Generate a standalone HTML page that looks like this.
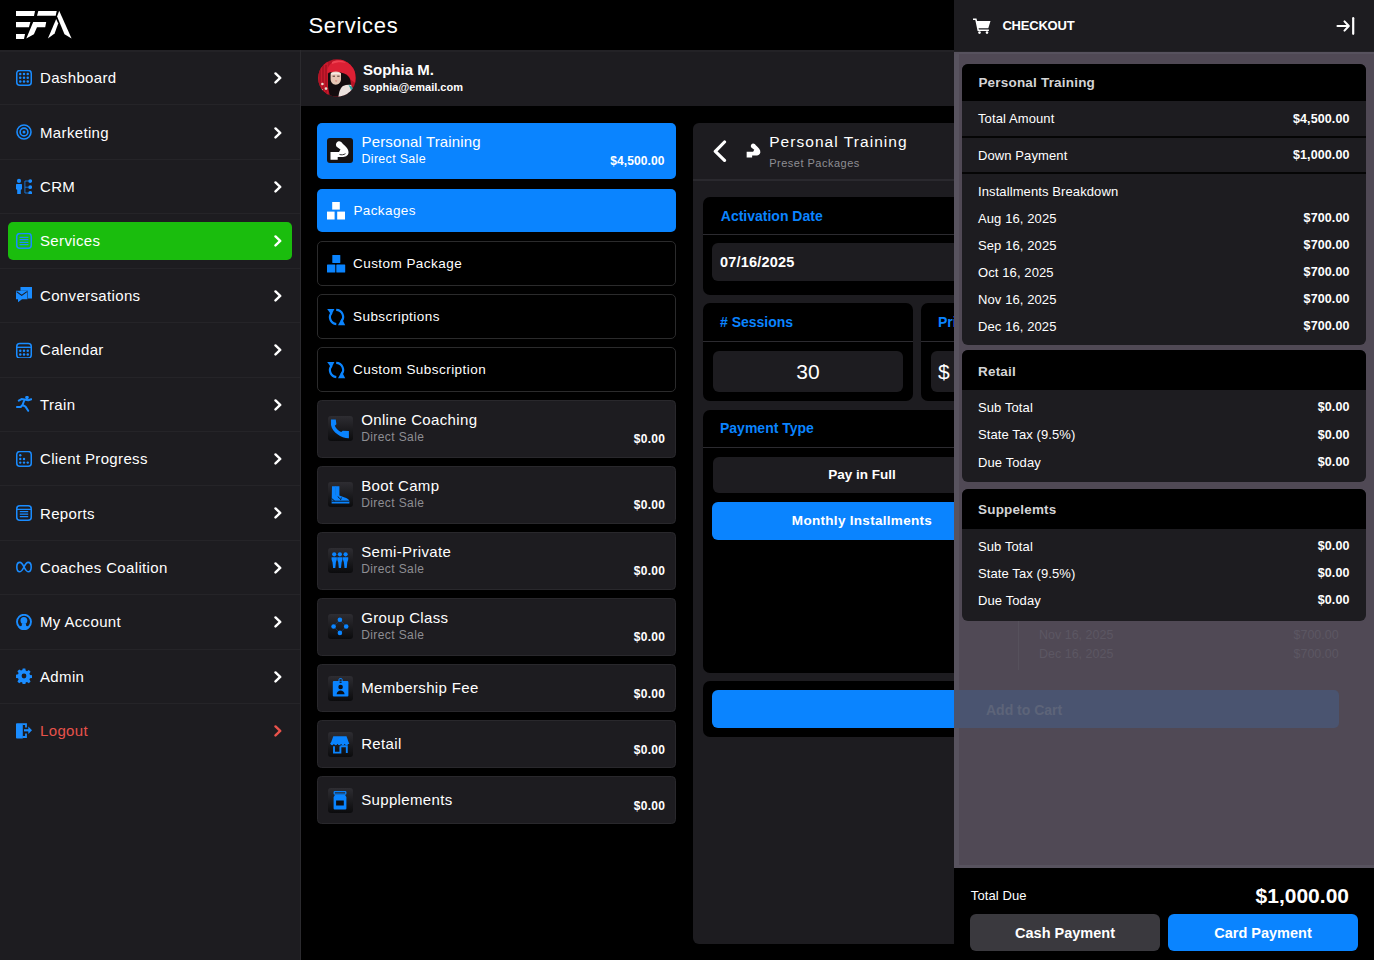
<!DOCTYPE html>
<html><head><meta charset="utf-8"><title>Services</title>
<style>
*{box-sizing:border-box;margin:0;padding:0}
html,body{width:1374px;height:960px;overflow:hidden;background:#000;font-family:"Liberation Sans",sans-serif;color:#fff;position:relative}
.a{position:absolute;display:block}
.t{position:absolute;line-height:1;white-space:nowrap}
</style></head><body>
<div class="a" style="left:0px;top:0px;width:1374px;height:50px;background:#000;border-radius:0px;"></div>
<svg class="a" style="left:16px;top:11px;" width="56" height="28" viewBox="0 0 56 28"><g fill="#fff">
<polygon points="0,0 19,0 18,5 0,5"/>
<polygon points="22.3,0 40.7,0 39.7,4.8 21,4.8"/>
<polygon points="0,11.1 14.4,11.1 12.9,16.2 0,16.2"/>
<polygon points="17.2,11.1 30.2,11.1 29.2,16.2 21,16.2 17.9,23.3 10.3,27.6"/>
<polygon points="0,23 9,23 8,27.9 0,27.9"/>
<polygon points="43.2,-0.2 55.6,27.4 48.5,23.2 41.1,5.5"/>
<polygon points="40.2,8 42.2,12.5 38.6,22.5 31.9,27.4"/>
</g></svg>
<div class="t" style="top:14.98px;font-size:22px;color:#fff;font-weight:400;letter-spacing:0.7px;left:308.5px;">Services</div>
<div class="a" style="left:0px;top:50px;width:300px;height:910px;background:#1d1c20;border-radius:0px;"></div>
<div class="a" style="left:300px;top:50px;width:1px;height:910px;background:#2b2a2e;border-radius:0px;"></div>
<div class="a" style="left:0px;top:50px;width:300px;height:2px;background:#232226;border-radius:0px;"></div>
<div class="a" style="left:0px;top:104px;width:300px;height:1px;background:#252428;border-radius:0px;"></div>
<div class="a" style="left:0px;top:159px;width:300px;height:1px;background:#252428;border-radius:0px;"></div>
<div class="a" style="left:0px;top:213px;width:300px;height:1px;background:#252428;border-radius:0px;"></div>
<div class="a" style="left:0px;top:268px;width:300px;height:1px;background:#252428;border-radius:0px;"></div>
<div class="a" style="left:0px;top:322px;width:300px;height:1px;background:#252428;border-radius:0px;"></div>
<div class="a" style="left:0px;top:377px;width:300px;height:1px;background:#252428;border-radius:0px;"></div>
<div class="a" style="left:0px;top:431px;width:300px;height:1px;background:#252428;border-radius:0px;"></div>
<div class="a" style="left:0px;top:485px;width:300px;height:1px;background:#252428;border-radius:0px;"></div>
<div class="a" style="left:0px;top:540px;width:300px;height:1px;background:#252428;border-radius:0px;"></div>
<div class="a" style="left:0px;top:594px;width:300px;height:1px;background:#252428;border-radius:0px;"></div>
<div class="a" style="left:0px;top:649px;width:300px;height:1px;background:#252428;border-radius:0px;"></div>
<div class="a" style="left:0px;top:703px;width:300px;height:1px;background:#252428;border-radius:0px;"></div>
<div class="a" style="left:8px;top:222px;width:284px;height:38px;background:#1abd0d;border-radius:5px;"></div>
<svg class="a" style="left:16px;top:70px;" width="16" height="16" viewBox="0 0 16 16"><rect x="0.75" y="0.4" width="14.5" height="14.8" rx="3" fill="none" stroke="#1a8cff" stroke-width="1.5"/><circle cx="4.25" cy="4.0" r="1.25" fill="#1a8cff"/><circle cx="4.25" cy="7.8" r="1.25" fill="#1a8cff"/><circle cx="4.25" cy="11.6" r="1.25" fill="#1a8cff"/><circle cx="8.0" cy="4.0" r="1.25" fill="#1a8cff"/><circle cx="8.0" cy="7.8" r="1.25" fill="#1a8cff"/><circle cx="8.0" cy="11.6" r="1.25" fill="#1a8cff"/><circle cx="11.75" cy="4.0" r="1.25" fill="#1a8cff"/><circle cx="11.75" cy="7.8" r="1.25" fill="#1a8cff"/><circle cx="11.75" cy="11.6" r="1.25" fill="#1a8cff"/></svg>
<div class="t" style="top:70.20px;font-size:15px;color:#fff;font-weight:400;letter-spacing:0.35px;left:40px;">Dashboard</div>
<svg class="a" style="left:272px;top:71px;" width="11" height="13" viewBox="0 0 11 13"><path d="M3.5 2.4L8.2 6.9 3.5 11.4" stroke="#fff" stroke-width="2.4" fill="none" stroke-linecap="round" stroke-linejoin="round"/></svg>
<svg class="a" style="left:16px;top:124px;" width="16" height="16" viewBox="0 0 16 16"><circle cx="8" cy="8" r="7" fill="none" stroke="#1a8cff" stroke-width="1.6"/><circle cx="8" cy="8" r="3.9" fill="none" stroke="#1a8cff" stroke-width="1.6"/><circle cx="8" cy="8" r="1.5" fill="#1a8cff"/></svg>
<div class="t" style="top:124.62px;font-size:15px;color:#fff;font-weight:400;letter-spacing:0.35px;left:40px;">Marketing</div>
<svg class="a" style="left:272px;top:126px;" width="11" height="13" viewBox="0 0 11 13"><path d="M3.5 2.4L8.2 6.9 3.5 11.4" stroke="#fff" stroke-width="2.4" fill="none" stroke-linecap="round" stroke-linejoin="round"/></svg>
<svg class="a" style="left:16px;top:178px;" width="16" height="16" viewBox="0 0 16 16"><circle cx="3" cy="2.9" r="2.1" fill="#1a8cff"/><path d="M0.6 6h4.8c0.4 0 0.6 0.3 0.6 0.7v4.3l-1.2 1v4.6H1.2V12l-1.2-1V6.7c0-0.4 0.3-0.7 0.6-0.7z" fill="#1a8cff"/><path d="M8.9 3v12M8.9 3h4M8.9 9.2h4M8.9 15h4" stroke="#1a8cff" stroke-width="1" stroke-opacity="0.75" fill="none"/><circle cx="14.2" cy="3.1" r="1.9" fill="#1a8cff"/><circle cx="14.2" cy="9.2" r="1.9" fill="#1a8cff"/><circle cx="14.2" cy="15" r="1.9" fill="#1a8cff"/></svg>
<div class="t" style="top:179.04px;font-size:15px;color:#fff;font-weight:400;letter-spacing:0.35px;left:40px;">CRM</div>
<svg class="a" style="left:272px;top:180px;" width="11" height="13" viewBox="0 0 11 13"><path d="M3.5 2.4L8.2 6.9 3.5 11.4" stroke="#fff" stroke-width="2.4" fill="none" stroke-linecap="round" stroke-linejoin="round"/></svg>
<svg class="a" style="left:16px;top:233px;" width="16" height="16" viewBox="0 0 16 16"><rect x="0.75" y="0.5" width="14.5" height="14.8" rx="3" fill="none" stroke="#1a8cff" stroke-width="1.5"/><path d="M3.6 4.4h8.8M3.6 6.6h8.8M3.6 9.3h8.8M3.6 11.7h8.8" stroke="#1a8cff" stroke-width="1.2"/></svg>
<div class="t" style="top:233.46px;font-size:15px;color:#fff;font-weight:400;letter-spacing:0.35px;left:40px;">Services</div>
<svg class="a" style="left:272px;top:234px;" width="11" height="13" viewBox="0 0 11 13"><path d="M3.5 2.4L8.2 6.9 3.5 11.4" stroke="#fff" stroke-width="2.4" fill="none" stroke-linecap="round" stroke-linejoin="round"/></svg>
<svg class="a" style="left:16px;top:287px;" width="16" height="16" viewBox="0 0 16 16"><path d="M4.5 0h11.5v11.5h-4V3.8H4.5z" fill="#1a8cff"/><path d="M0 3.8h11.5v8.5H6l-4 3v-3H0z" fill="#1a8cff"/><path d="M0.6 4.6l5.1 3.8 5.2-3.8" stroke="#1d1c20" stroke-width="1.1" fill="none"/></svg>
<div class="t" style="top:287.88px;font-size:15px;color:#fff;font-weight:400;letter-spacing:0.35px;left:40px;">Conversations</div>
<svg class="a" style="left:272px;top:289px;" width="11" height="13" viewBox="0 0 11 13"><path d="M3.5 2.4L8.2 6.9 3.5 11.4" stroke="#fff" stroke-width="2.4" fill="none" stroke-linecap="round" stroke-linejoin="round"/></svg>
<svg class="a" style="left:16px;top:342px;" width="16" height="16" viewBox="0 0 16 16"><rect x="0.75" y="1.5" width="14.5" height="14.5" rx="3" fill="none" stroke="#1a8cff" stroke-width="1.5"/><path d="M1 5.3h14" stroke="#1a8cff" stroke-width="1.4"/><circle cx="4.25" cy="8.8" r="1.25" fill="#1a8cff"/><circle cx="4.25" cy="12.5" r="1.25" fill="#1a8cff"/><circle cx="8.0" cy="8.8" r="1.25" fill="#1a8cff"/><circle cx="8.0" cy="12.5" r="1.25" fill="#1a8cff"/><circle cx="11.75" cy="8.8" r="1.25" fill="#1a8cff"/><circle cx="11.75" cy="12.5" r="1.25" fill="#1a8cff"/></svg>
<div class="t" style="top:342.30px;font-size:15px;color:#fff;font-weight:400;letter-spacing:0.35px;left:40px;">Calendar</div>
<svg class="a" style="left:272px;top:343px;" width="11" height="13" viewBox="0 0 11 13"><path d="M3.5 2.4L8.2 6.9 3.5 11.4" stroke="#fff" stroke-width="2.4" fill="none" stroke-linecap="round" stroke-linejoin="round"/></svg>
<svg class="a" style="left:16px;top:396px;" width="16" height="16" viewBox="0 0 16 16"><circle cx="11" cy="1.6" r="1.8" fill="#1a8cff"/><path d="M2.8 4.6L5.5 3.1 8.5 3.6 12.2 4.3 15.3 3.2M8.4 4 6.5 9M0.9 11h3.8L6.5 9l3 1.6 2.7 4.2" stroke="#1a8cff" stroke-width="2" fill="none" stroke-linecap="round" stroke-linejoin="round"/></svg>
<div class="t" style="top:396.72px;font-size:15px;color:#fff;font-weight:400;letter-spacing:0.35px;left:40px;">Train</div>
<svg class="a" style="left:272px;top:398px;" width="11" height="13" viewBox="0 0 11 13"><path d="M3.5 2.4L8.2 6.9 3.5 11.4" stroke="#fff" stroke-width="2.4" fill="none" stroke-linecap="round" stroke-linejoin="round"/></svg>
<svg class="a" style="left:16px;top:451px;" width="16" height="16" viewBox="0 0 16 16"><rect x="0.75" y="0.5" width="14.5" height="14.7" rx="3" fill="none" stroke="#1a8cff" stroke-width="1.5"/><circle cx="4.25" cy="4.3" r="1.2" fill="#1a8cff"/><circle cx="4.25" cy="8" r="1.2" fill="#1a8cff"/><circle cx="4.25" cy="11.6" r="1.2" fill="#1a8cff"/><circle cx="8" cy="8" r="1.2" fill="#1a8cff"/><circle cx="8" cy="11.6" r="1.2" fill="#1a8cff"/><circle cx="11.75" cy="11.6" r="1.2" fill="#1a8cff"/></svg>
<div class="t" style="top:451.14px;font-size:15px;color:#fff;font-weight:400;letter-spacing:0.35px;left:40px;">Client Progress</div>
<svg class="a" style="left:272px;top:452px;" width="11" height="13" viewBox="0 0 11 13"><path d="M3.5 2.4L8.2 6.9 3.5 11.4" stroke="#fff" stroke-width="2.4" fill="none" stroke-linecap="round" stroke-linejoin="round"/></svg>
<svg class="a" style="left:16px;top:505px;" width="16" height="16" viewBox="0 0 16 16"><rect x="0.75" y="0.75" width="14.5" height="14.5" rx="3" fill="none" stroke="#1a8cff" stroke-width="1.5"/><path d="M1 4.3h14M3.8 6.7h8.4M3.8 9.1h8.4M3.8 11.6h8.4" stroke="#1a8cff" stroke-width="1.2"/></svg>
<div class="t" style="top:505.56px;font-size:15px;color:#fff;font-weight:400;letter-spacing:0.35px;left:40px;">Reports</div>
<svg class="a" style="left:272px;top:506px;" width="11" height="13" viewBox="0 0 11 13"><path d="M3.5 2.4L8.2 6.9 3.5 11.4" stroke="#fff" stroke-width="2.4" fill="none" stroke-linecap="round" stroke-linejoin="round"/></svg>
<svg class="a" style="left:16px;top:559px;" width="16" height="16" viewBox="0 0 16 16"><path d="M8 8C6.5 5 5.5 3.4 3.9 3.4 1.9 3.4 0.8 5.5 0.8 8s1.1 4.7 3.1 4.7C5.5 12.7 6.5 11 8 8s2.5-4.6 4.1-4.6c2 0 3.1 2.1 3.1 4.6s-1.1 4.7-3.1 4.7C10.5 12.7 9.5 11 8 8z" fill="none" stroke="#1a8cff" stroke-width="1.6"/></svg>
<div class="t" style="top:559.98px;font-size:15px;color:#fff;font-weight:400;letter-spacing:0.35px;left:40px;">Coaches Coalition</div>
<svg class="a" style="left:272px;top:561px;" width="11" height="13" viewBox="0 0 11 13"><path d="M3.5 2.4L8.2 6.9 3.5 11.4" stroke="#fff" stroke-width="2.4" fill="none" stroke-linecap="round" stroke-linejoin="round"/></svg>
<svg class="a" style="left:16px;top:614px;" width="16" height="16" viewBox="0 0 16 16"><circle cx="8" cy="7.8" r="7" fill="none" stroke="#1a8cff" stroke-width="1.9"/><ellipse cx="7.9" cy="6.5" rx="3.4" ry="3.6" fill="#1a8cff"/><path d="M6 9.5h3.8l0.5 2.4c1.8 0.3 2.9 0.9 3.3 1.5A7 7 0 0 1 2.4 13.4c0.4-0.6 1.5-1.2 3.2-1.5z" fill="#1a8cff"/></svg>
<div class="t" style="top:614.40px;font-size:15px;color:#fff;font-weight:400;letter-spacing:0.35px;left:40px;">My Account</div>
<svg class="a" style="left:272px;top:615px;" width="11" height="13" viewBox="0 0 11 13"><path d="M3.5 2.4L8.2 6.9 3.5 11.4" stroke="#fff" stroke-width="2.4" fill="none" stroke-linecap="round" stroke-linejoin="round"/></svg>
<svg class="a" style="left:16px;top:668px;" width="16" height="16" viewBox="0 0 16 16"><path d="M6.7 0.5h2.6l0.4 2.1 1.3 0.6 1.8-1.2 1.8 1.8-1.2 1.8 0.6 1.3 2.1 0.4v2.6l-2.1 0.4-0.6 1.3 1.2 1.8-1.8 1.8-1.8-1.2-1.3 0.6-0.4 2.1H6.7l-0.4-2.1-1.3-0.6-1.8 1.2-1.8-1.8 1.2-1.8-0.6-1.3-2.1-0.4V6.7l2.1-0.4 0.6-1.3-1.2-1.8 1.8-1.8 1.8 1.2 1.3-0.6z" fill="#1a8cff"/><circle cx="8" cy="8" r="2.4" fill="#1d1c20"/></svg>
<div class="t" style="top:668.82px;font-size:15px;color:#fff;font-weight:400;letter-spacing:0.35px;left:40px;">Admin</div>
<svg class="a" style="left:272px;top:670px;" width="11" height="13" viewBox="0 0 11 13"><path d="M3.5 2.4L8.2 6.9 3.5 11.4" stroke="#fff" stroke-width="2.4" fill="none" stroke-linecap="round" stroke-linejoin="round"/></svg>
<svg class="a" style="left:16px;top:723px;" width="16" height="16" viewBox="0 0 16 16"><path d="M0.8 0.3h6v15.2H0.8c-0.4 0-0.8-0.3-0.8-0.8V1.1C0 0.6 0.4 0.3 0.8 0.3z" fill="#1a8cff"/><path d="M6.5 1.2h3.5v3.2M10 10.4v3.6H6.5" stroke="#1a8cff" stroke-width="1.8" fill="none"/><path d="M8 7.3h5" stroke="#1a8cff" stroke-width="2.2"/><path d="M12.3 3.6L16 7.3 12.3 11z" fill="#1a8cff"/></svg>
<div class="t" style="top:723.24px;font-size:15px;color:#e8524b;font-weight:400;letter-spacing:0.35px;left:40px;">Logout</div>
<svg class="a" style="left:272px;top:724px;" width="11" height="13" viewBox="0 0 11 13"><path d="M3.5 2.4L8.2 6.9 3.5 11.4" stroke="#e8524b" stroke-width="2.4" fill="none" stroke-linecap="round" stroke-linejoin="round"/></svg>
<div class="a" style="left:301px;top:50px;width:1073px;height:56px;background:#1d1c20;border-radius:0px;"></div>
<div class="a" style="left:301px;top:50px;width:1073px;height:2px;background:#232226;border-radius:0px;"></div>
<svg class="a" style="left:317.5px;top:58.5px" width="38" height="38" viewBox="0 0 38 38">
<defs><clipPath id="cc"><circle cx="19" cy="19" r="18.8"/></clipPath></defs>
<g clip-path="url(#cc)">
<rect width="38" height="38" fill="#b51426"/>
<path d="M0 0h10v38H0z" fill="#c81a2c"/>
<path d="M2 4v32M5 4v32M8 6v30" stroke="#8e0c1c" stroke-width="0.9"/>
<circle cx="4.4" cy="25" r="1.3" fill="#e8dcd0"/><circle cx="8" cy="29.6" r="1.3" fill="#e8dcd0"/><circle cx="4" cy="31" r="1" fill="#d8c8c0"/>
<path d="M9 14C9 5 16 0.7 24 0.7S37.4 7 37.4 16v8L33 21c-2-4-5-6.5-8-6.8L10.8 13.6z" fill="#dc2034"/>
<path d="M14 3c4-2 10-2 14 1-4-1-9-1-14 1z" fill="#ee4050"/>
<path d="M10 14.5c1-1 2-1.3 3-1.3h9l4 1.3c3 1 5.6 3.5 6.4 7l1 7.5-2 8.8H12l-2-10z" fill="#140c0e"/>
<path d="M12.6 15c0-1.5 2-2.5 5.2-2.5s5.2 1 5.2 2.8v5c0 3-2.2 5.4-5.2 5.4s-5.2-2.4-5.2-5.4z" fill="#e8c6b4"/>
<path d="M13 14.3c1.5-1.2 8-1.2 9.8 0l-0.2 1.5c-2-0.8-7.4-0.8-9.4 0z" fill="#f6ece6"/>
<path d="M14.6 17.2h2.4M19.2 17.2h2.4" stroke="#3a2220" stroke-width="0.9"/>
<path d="M16.8 21.8h2.6l-1.3 0.7z" fill="#c03a3a"/>
<path d="M20.4 38c0.5-5 2-9.5 4.6-11.1 2.5-1 5.6-1.2 8.3-0.9l1 11.9z" fill="#ece2de"/>
<path d="M30.5 26c3 0.5 5 3 5.2 6l-1.6 4.6c-0.5-4-1.5-7.5-3.6-10.6z" fill="#2aa5a0"/>
</g></svg>
<div class="t" style="top:61.95px;font-size:15px;color:#fff;font-weight:700;left:363px;">Sophia M.</div>
<div class="t" style="top:82.39px;font-size:11px;color:#fff;font-weight:700;left:363px;">sophia@email.com</div>
<div class="a" style="left:316.5px;top:123px;width:359px;height:56px;background:#0a84ff;border-radius:5px;"></div>
<div class="a" style="left:327.3px;top:138.2px;width:25.4px;height:24.8px;background:#161314;border-radius:3px;"></div>
<svg class="a" style="left:327.3px;top:138.2px;" width="25" height="25" viewBox="0 0 25 25"><path d="M3.5 14H12l1.5-2.5L10 9C8.5 8 8.5 4.5 11 3.5 13 2.8 14.5 4 15.5 5.5 19 8.5 22 11.5 21.5 15 21 18 18 19 15 19h-4.3v2.8H3.5z" fill="#fff"/><path d="M12.5 16.5c2 0.6 4.2 0.3 6-0.8" stroke="#1a1718" stroke-width="0.9" fill="none"/></svg>
<div class="t" style="top:134.10px;font-size:15px;color:#fff;font-weight:400;letter-spacing:0.15px;left:361.5px;">Personal Training</div>
<div class="t" style="top:153.42px;font-size:12.5px;color:#fff;font-weight:400;letter-spacing:0.3px;left:361.5px;">Direct Sale</div>
<div class="t" style="top:154.54px;font-size:12px;color:#fff;font-weight:700;letter-spacing:0.1px;right:709.5px;text-align:right;">$4,500.00</div>
<div class="a" style="left:316.5px;top:189px;width:359px;height:43px;background:#0a84ff;border-radius:5px;"></div>
<svg class="a" style="left:327px;top:202px;" width="18" height="18" viewBox="0 0 18 18"><rect x="5.2" y="0" width="7.6" height="7.6" fill="#fff"/><rect x="0" y="9.6" width="7.6" height="7.9" fill="#fff"/><rect x="10.2" y="9.6" width="7.8" height="7.9" fill="#fff"/></svg>
<div class="t" style="top:203.57px;font-size:13.5px;color:#fff;font-weight:400;letter-spacing:0.4px;left:353.4px;">Packages</div>
<div class="a" style="left:316.5px;top:241px;width:359px;height:45px;background:#000;border-radius:5px;border:1px solid #2b2b2c;"></div>
<svg class="a" style="left:327px;top:254px" width="19" height="20" viewBox="0 0 19 20"><rect x="5.3" y="1" width="8" height="8" rx="0.6" fill="#0a84ff"/><rect x="0" y="10.4" width="8.3" height="8.2" rx="0.6" fill="#0a84ff"/><rect x="9.3" y="10.4" width="8.9" height="8.2" rx="0.6" fill="#0a84ff"/></svg>
<div class="t" style="top:256.57px;font-size:13.5px;color:#fff;font-weight:400;letter-spacing:0.45px;left:353px;">Custom Package</div>
<div class="a" style="left:316.5px;top:294px;width:359px;height:45px;background:#000;border-radius:5px;border:1px solid #2b2b2c;"></div>
<svg class="a" style="left:327px;top:307px" width="19" height="20" viewBox="0 0 19 20"><path d="M4.6 5.6A7 7 0 0 0 9.3 17.1" stroke="#0a84ff" stroke-width="2.2" fill="none"/><path d="M0.2 1.9H7.4L4.4 7.9z" fill="#0a84ff"/><path d="M9.2 2.9A7 7 0 0 1 14.3 14.6" stroke="#0a84ff" stroke-width="2.2" fill="none"/><path d="M11 18.2H18.2L14.8 11.4z" fill="#0a84ff"/></svg>
<div class="t" style="top:309.57px;font-size:13.5px;color:#fff;font-weight:400;letter-spacing:0.45px;left:353px;">Subscriptions</div>
<div class="a" style="left:316.5px;top:347px;width:359px;height:45px;background:#000;border-radius:5px;border:1px solid #2b2b2c;"></div>
<svg class="a" style="left:327px;top:360px" width="19" height="20" viewBox="0 0 19 20"><path d="M4.6 5.6A7 7 0 0 0 9.3 17.1" stroke="#0a84ff" stroke-width="2.2" fill="none"/><path d="M0.2 1.9H7.4L4.4 7.9z" fill="#0a84ff"/><path d="M9.2 2.9A7 7 0 0 1 14.3 14.6" stroke="#0a84ff" stroke-width="2.2" fill="none"/><path d="M11 18.2H18.2L14.8 11.4z" fill="#0a84ff"/></svg>
<div class="t" style="top:362.57px;font-size:13.5px;color:#fff;font-weight:400;letter-spacing:0.45px;left:353px;">Custom Subscription</div>
<div class="a" style="left:316.5px;top:400px;width:359px;height:58px;background:#1d1c20;border-radius:4.5px;border:1px solid #29282c;"></div>
<div class="a" style="left:328px;top:416px;width:25px;height:25px;border-radius:3px;background:linear-gradient(#2e2d32,#0b0b0d);"></div>
<svg class="a" style="left:328px;top:416px" width="25" height="25" viewBox="0 0 25 25"><path d="M3 3.4h4.8l0.6 4.9-1.6 1.4c1.2 2.6 3.6 5 6.4 6.3l1.5-1.2 6.2 0.3v7.1C13.5 22.4 4.3 16.5 3 9z" fill="#0a84ff"/></svg>
<div class="t" style="top:411.90px;font-size:15px;color:#fff;font-weight:400;letter-spacing:0.35px;left:361.2px;">Online Coaching</div>
<div class="t" style="top:431.04px;font-size:12px;color:#8e8e93;font-weight:400;letter-spacing:0.4px;left:361.2px;">Direct Sale</div>
<div class="t" style="top:432.64px;font-size:12px;color:#fff;font-weight:700;letter-spacing:0.3px;right:708.7px;text-align:right;">$0.00</div>
<div class="a" style="left:316.5px;top:466px;width:359px;height:58px;background:#1d1c20;border-radius:4.5px;border:1px solid #29282c;"></div>
<div class="a" style="left:328px;top:482px;width:25px;height:25px;border-radius:3px;background:linear-gradient(#2e2d32,#0b0b0d);"></div>
<svg class="a" style="left:328px;top:482px" width="25" height="25" viewBox="0 0 25 25"><path d="M4 4.3h7.4v9.2l4.6 1.7c3.2 0.9 5.4 2.2 5.4 4.2v2H3.6z" fill="#0a84ff"/><path d="M3.6 16.5l3 2.4M10 14.5l1.6 2.2M13.3 15.5l-0.8 2.6M3.6 19.2h17.8" stroke="#0d0d10" stroke-width="0.9" fill="none"/><path d="M7.6 4.3v9" stroke="#1577d8" stroke-width="0.8"/></svg>
<div class="t" style="top:477.90px;font-size:15px;color:#fff;font-weight:400;letter-spacing:0.35px;left:361.2px;">Boot Camp</div>
<div class="t" style="top:497.04px;font-size:12px;color:#8e8e93;font-weight:400;letter-spacing:0.4px;left:361.2px;">Direct Sale</div>
<div class="t" style="top:498.64px;font-size:12px;color:#fff;font-weight:700;letter-spacing:0.3px;right:708.7px;text-align:right;">$0.00</div>
<div class="a" style="left:316.5px;top:532px;width:359px;height:58px;background:#1d1c20;border-radius:4.5px;border:1px solid #29282c;"></div>
<div class="a" style="left:328px;top:548px;width:25px;height:25px;border-radius:3px;background:linear-gradient(#2e2d32,#0b0b0d);"></div>
<svg class="a" style="left:328px;top:548px" width="25" height="25" viewBox="0 0 25 25"><circle cx="6.2" cy="6.3" r="2.1" fill="#0a84ff"/><path d="M3.6 9.2h5.2c0.3 2-0.3 3.5-0.9 5l-0.6 5.8h-2.2l-0.6-5.8c-0.6-1.5-1.2-3-0.9-5z" fill="#0a84ff"/><circle cx="11.9" cy="6.3" r="2.1" fill="#0a84ff"/><path d="M9.3 9.2h5.2c0.3 2-0.3 3.5-0.9 5l-0.6 5.8h-2.2l-0.6-5.8c-0.6-1.5-1.2-3-0.9-5z" fill="#0a84ff"/><circle cx="17.6" cy="6.3" r="2.1" fill="#0a84ff"/><path d="M15.000000000000002 9.2h5.2c0.3 2-0.3 3.5-0.9 5l-0.6 5.8h-2.2l-0.6-5.8c-0.6-1.5-1.2-3-0.9-5z" fill="#0a84ff"/></svg>
<div class="t" style="top:543.90px;font-size:15px;color:#fff;font-weight:400;letter-spacing:0.35px;left:361.2px;">Semi-Private</div>
<div class="t" style="top:563.04px;font-size:12px;color:#8e8e93;font-weight:400;letter-spacing:0.4px;left:361.2px;">Direct Sale</div>
<div class="t" style="top:564.64px;font-size:12px;color:#fff;font-weight:700;letter-spacing:0.3px;right:708.7px;text-align:right;">$0.00</div>
<div class="a" style="left:316.5px;top:598px;width:359px;height:58px;background:#1d1c20;border-radius:4.5px;border:1px solid #29282c;"></div>
<div class="a" style="left:328px;top:614px;width:25px;height:25px;border-radius:3px;background:linear-gradient(#2e2d32,#0b0b0d);"></div>
<svg class="a" style="left:328px;top:614px" width="25" height="25" viewBox="0 0 25 25"><circle cx="11.9" cy="5.7" r="2.3" fill="#0a84ff"/><circle cx="5.6" cy="12.5" r="2.3" fill="#0a84ff"/><circle cx="18.2" cy="12.5" r="2.3" fill="#0a84ff"/><circle cx="11.9" cy="18.9" r="2.3" fill="#0a84ff"/><path d="M11.9 5.7L5.6 12.5 11.9 18.9 18.2 12.5z" stroke="#0a84ff" stroke-width="0.5" stroke-opacity="0.5" fill="none"/></svg>
<div class="t" style="top:609.90px;font-size:15px;color:#fff;font-weight:400;letter-spacing:0.35px;left:361.2px;">Group Class</div>
<div class="t" style="top:629.04px;font-size:12px;color:#8e8e93;font-weight:400;letter-spacing:0.4px;left:361.2px;">Direct Sale</div>
<div class="t" style="top:630.64px;font-size:12px;color:#fff;font-weight:700;letter-spacing:0.3px;right:708.7px;text-align:right;">$0.00</div>
<div class="a" style="left:316.5px;top:664px;width:359px;height:48px;background:#1d1c20;border-radius:4.5px;border:1px solid #29282c;"></div>
<div class="a" style="left:328px;top:675.5px;width:25px;height:25px;border-radius:3px;background:linear-gradient(#2e2d32,#0b0b0d);"></div>
<svg class="a" style="left:328px;top:675.5px" width="25" height="25" viewBox="0 0 25 25"><rect x="4.8" y="5" width="15.6" height="15.6" rx="1" fill="#0a84ff"/><rect x="11" y="2.6" width="3.2" height="4" rx="1" fill="none" stroke="#0a84ff" stroke-width="1"/><rect x="11.6" y="5.6" width="2" height="1.2" fill="#111"/><circle cx="12.6" cy="11" r="2.3" fill="#0d0d10"/><path d="M8.6 18.2c0.4-2.6 2-3.8 4-3.8s3.6 1.2 4 3.8z" fill="#0d0d10"/></svg>
<div class="t" style="top:680.30px;font-size:15px;color:#fff;font-weight:400;letter-spacing:0.35px;left:361.2px;">Membership Fee</div>
<div class="t" style="top:687.64px;font-size:12px;color:#fff;font-weight:700;letter-spacing:0.3px;right:708.7px;text-align:right;">$0.00</div>
<div class="a" style="left:316.5px;top:720px;width:359px;height:48px;background:#1d1c20;border-radius:4.5px;border:1px solid #29282c;"></div>
<div class="a" style="left:328px;top:731.5px;width:25px;height:25px;border-radius:3px;background:linear-gradient(#2e2d32,#0b0b0d);"></div>
<svg class="a" style="left:328px;top:731.5px" width="25" height="25" viewBox="0 0 25 25"><path d="M5.3 4.3h13.2l2.8 7.6H2.5z" fill="#0a84ff"/><circle cx="4.1" cy="11.6" r="1.65" fill="#0a84ff"/><circle cx="7.7" cy="11.6" r="1.65" fill="#0a84ff"/><circle cx="11.3" cy="11.6" r="1.65" fill="#0a84ff"/><circle cx="14.9" cy="11.6" r="1.65" fill="#0a84ff"/><circle cx="18.5" cy="11.6" r="1.65" fill="#0a84ff"/><path d="M6 14.2v6.4h6.4v-6.4M12.4 14.2h6.4v6.8" stroke="#0a84ff" stroke-width="1.9" fill="none"/></svg>
<div class="t" style="top:736.30px;font-size:15px;color:#fff;font-weight:400;letter-spacing:0.35px;left:361.2px;">Retail</div>
<div class="t" style="top:743.64px;font-size:12px;color:#fff;font-weight:700;letter-spacing:0.3px;right:708.7px;text-align:right;">$0.00</div>
<div class="a" style="left:316.5px;top:776px;width:359px;height:48px;background:#1d1c20;border-radius:4.5px;border:1px solid #29282c;"></div>
<div class="a" style="left:328px;top:787.5px;width:25px;height:25px;border-radius:3px;background:linear-gradient(#2e2d32,#0b0b0d);"></div>
<svg class="a" style="left:328px;top:787.5px" width="25" height="25" viewBox="0 0 25 25"><rect x="6.2" y="3.6" width="11.6" height="2.6" rx="0.6" fill="none" stroke="#0a84ff" stroke-width="1.3"/><path d="M7 6.8h10l1.4 2.2v11.6c0 0.5-0.4 0.9-0.9 0.9h-11c-0.5 0-0.9-0.4-0.9-0.9V9z" fill="#0a84ff"/><rect x="8.1" y="12.5" width="7.7" height="5" fill="#0d0d10"/></svg>
<div class="t" style="top:792.30px;font-size:15px;color:#fff;font-weight:400;letter-spacing:0.35px;left:361.2px;">Supplements</div>
<div class="t" style="top:799.64px;font-size:12px;color:#fff;font-weight:700;letter-spacing:0.3px;right:708.7px;text-align:right;">$0.00</div>
<div class="a" style="left:693px;top:122.5px;width:400px;height:821px;background:#1d1c20;border-radius:6px;"></div>
<div class="a" style="left:693px;top:179px;width:400px;height:1.5px;background:#2a292e;border-radius:0px;"></div>
<svg class="a" style="left:712px;top:140px;" width="16" height="23" viewBox="0 0 16 23"><path d="M12.5 2L3.3 11.4 12.5 20.4" stroke="#fff" stroke-width="3.2" fill="none" stroke-linecap="round" stroke-linejoin="round"/></svg>
<svg class="a" style="left:744px;top:141px;" width="19" height="19" viewBox="0 0 25 25"><path d="M3.5 14H12l1.5-2.5L10 9C8.5 8 8.5 4.5 11 3.5 13 2.8 14.5 4 15.5 5.5 19 8.5 22 11.5 21.5 15 21 18 18 19 15 19h-4.3v2.8H3.5z" fill="#fff"/></svg>
<div class="t" style="top:134.48px;font-size:15.5px;color:#fff;font-weight:400;letter-spacing:1.05px;left:769.2px;">Personal Training</div>
<div class="t" style="top:157.69px;font-size:11px;color:#8e8e93;font-weight:400;letter-spacing:0.5px;left:769.2px;">Preset Packages</div>
<div class="a" style="left:703px;top:196.5px;width:400px;height:98px;background:#000;border-radius:7px;"></div>
<div class="t" style="top:208.55px;font-size:14px;color:#0a84ff;font-weight:700;left:720.8px;">Activation Date</div>
<div class="a" style="left:703px;top:234px;width:400px;height:1px;background:#2c2b30;border-radius:0px;"></div>
<div class="a" style="left:712px;top:243px;width:400px;height:38px;background:#1d1c20;border-radius:6px;"></div>
<div class="t" style="top:255.43px;font-size:14.5px;color:#fff;font-weight:700;letter-spacing:0.2px;left:720px;">07/16/2025</div>
<div class="a" style="left:703px;top:303px;width:210px;height:98px;background:#000;border-radius:7px;"></div>
<div class="t" style="top:315.15px;font-size:14px;color:#0a84ff;font-weight:700;left:720px;"># Sessions</div>
<div class="a" style="left:703px;top:340.5px;width:210px;height:1px;background:#2c2b30;border-radius:0px;"></div>
<div class="a" style="left:713px;top:350.5px;width:190px;height:41px;background:#1d1c20;border-radius:6px;"></div>
<div class="t" style="top:360.82px;font-size:21px;color:#fff;font-weight:400;left:508px;width:600px;text-align:center;">30</div>
<div class="a" style="left:920.5px;top:303px;width:300px;height:98px;background:#000;border-radius:7px;"></div>
<div class="t" style="top:315.15px;font-size:14px;color:#0a84ff;font-weight:700;left:938px;">Price</div>
<div class="a" style="left:920.5px;top:340.5px;width:300px;height:1px;background:#2c2b30;border-radius:0px;"></div>
<div class="a" style="left:931px;top:350.5px;width:200px;height:41px;background:#1d1c20;border-radius:6px;"></div>
<div class="t" style="top:360.82px;font-size:21px;color:#fff;font-weight:400;left:938px;">$</div>
<div class="a" style="left:703px;top:409.5px;width:400px;height:263px;background:#000;border-radius:7px;"></div>
<div class="t" style="top:421.15px;font-size:14px;color:#0a84ff;font-weight:700;left:720px;">Payment Type</div>
<div class="a" style="left:703px;top:446.5px;width:400px;height:1px;background:#2c2b30;border-radius:0px;"></div>
<div class="a" style="left:713px;top:456.5px;width:380px;height:36.5px;background:#1d1c20;border-radius:6px;"></div>
<div class="t" style="top:468.27px;font-size:13.5px;color:#fff;font-weight:700;left:562px;width:600px;text-align:center;">Pay in Full</div>
<div class="a" style="left:712px;top:502px;width:380px;height:38px;background:#0a84ff;border-radius:6px;"></div>
<div class="t" style="top:514.37px;font-size:13.5px;color:#fff;font-weight:700;letter-spacing:0.3px;left:562px;width:600px;text-align:center;">Monthly Installments</div>
<div class="a" style="left:703px;top:681px;width:400px;height:56px;background:#000;border-radius:7px;"></div>
<div class="a" style="left:712px;top:690px;width:380px;height:38px;background:#0a84ff;border-radius:6px;"></div>
<div class="a" style="left:954px;top:0px;width:420px;height:51px;background:#1d1c20;border-radius:0px;"></div>
<svg class="a" style="left:973px;top:18px;" width="18" height="16" viewBox="0 0 18 16"><path d="M0.5 1.5h3l2.3 8.5h9.2l2-6.5H5" stroke="#fff" stroke-width="0" fill="none"/><path d="M0 0.5h3.5l0.6 2.5h13.4l-2.2 7.3H5.6l0.3 1.2h10v1.6H4.6L2.3 2.1H0z" fill="#fff"/><circle cx="6.5" cy="14.6" r="1.3" fill="#fff"/><circle cx="14" cy="14.6" r="1.3" fill="#fff"/></svg>
<div class="t" style="top:19.40px;font-size:13px;color:#fff;font-weight:700;letter-spacing:-0.2px;left:1002.4px;">CHECKOUT</div>
<svg class="a" style="left:1336px;top:16px;" width="20" height="19" viewBox="0 0 20 19"><path d="M1.5 10h11M8.5 5.4l4.3 4.6-4.3 4.6" stroke="#fff" stroke-width="2.1" fill="none" stroke-linecap="round" stroke-linejoin="round"/><path d="M17.2 2.2v15.6" stroke="#fff" stroke-width="2.2" stroke-linecap="round"/></svg>
<div class="a" style="left:954px;top:51.5px;width:420px;height:816px;background:#504955;border-radius:0px;"></div>
<div class="a" style="left:954px;top:51.5px;width:5px;height:816px;background:#58535f;border-radius:0px;"></div>
<div class="a" style="left:954px;top:865px;width:420px;height:2.5px;background:#58535f;border-radius:0px;"></div>
<div class="a" style="left:954px;top:51.5px;width:420px;height:2px;background:#57525e;border-radius:0px;"></div>
<div class="a" style="left:1018px;top:620px;width:1px;height:50px;background:#56515c;border-radius:0px;"></div>
<div class="t" style="top:629.22px;font-size:12.5px;color:#5c5763;font-weight:400;left:1039px;">Nov 16, 2025</div>
<div class="t" style="top:648.12px;font-size:12.5px;color:#5c5763;font-weight:400;left:1039px;">Dec 16, 2025</div>
<div class="t" style="top:629.22px;font-size:12.5px;color:#5c5763;font-weight:400;right:35.299999999999955px;text-align:right;">$700.00</div>
<div class="t" style="top:648.12px;font-size:12.5px;color:#5c5763;font-weight:400;right:35.299999999999955px;text-align:right;">$700.00</div>
<div class="a" style="left:954px;top:689.6px;width:385px;height:38.2px;background:#4a5470;border-radius:5px;border-top-left-radius:0;border-bottom-left-radius:0;"></div>
<div class="t" style="top:702.85px;font-size:14px;color:#5d6479;font-weight:700;left:986px;">Add to Cart</div>
<div class="a" style="left:962px;top:64px;width:404px;height:281px;background:#1d1c20;border-radius:6px;overflow:hidden;"></div>
<div class="a" style="left:962px;top:64px;width:404px;height:36.6px;background:#000;border-radius:6px;border-bottom-left-radius:0;border-bottom-right-radius:0;"></div>
<div class="t" style="top:75.97px;font-size:13.5px;color:#d4d4d6;font-weight:700;letter-spacing:0.2px;left:978.4px;">Personal Training</div>
<div class="t" style="top:112.20px;font-size:13px;color:#fff;font-weight:400;letter-spacing:0.1px;left:978px;">Total Amount</div>
<div class="t" style="top:112.62px;font-size:12.5px;color:#fff;font-weight:700;letter-spacing:0.1px;right:24.5px;text-align:right;">$4,500.00</div>
<div class="a" style="left:962px;top:136px;width:404px;height:1.5px;background:#050505;border-radius:0px;"></div>
<div class="t" style="top:148.80px;font-size:13px;color:#fff;font-weight:400;letter-spacing:0.1px;left:978px;">Down Payment</div>
<div class="t" style="top:149.22px;font-size:12.5px;color:#fff;font-weight:700;letter-spacing:0.1px;right:24.5px;text-align:right;">$1,000.00</div>
<div class="a" style="left:962px;top:172px;width:404px;height:1.5px;background:#050505;border-radius:0px;"></div>
<div class="t" style="top:184.80px;font-size:13px;color:#fff;font-weight:400;letter-spacing:0.1px;left:978px;">Installments Breakdown</div>
<div class="t" style="top:212.00px;font-size:13px;color:#fff;font-weight:400;letter-spacing:0.1px;left:978px;">Aug 16, 2025</div>
<div class="t" style="top:212.42px;font-size:12.5px;color:#fff;font-weight:700;letter-spacing:0.1px;right:24.5px;text-align:right;">$700.00</div>
<div class="t" style="top:239.00px;font-size:13px;color:#fff;font-weight:400;letter-spacing:0.1px;left:978px;">Sep 16, 2025</div>
<div class="t" style="top:239.42px;font-size:12.5px;color:#fff;font-weight:700;letter-spacing:0.1px;right:24.5px;text-align:right;">$700.00</div>
<div class="t" style="top:266.00px;font-size:13px;color:#fff;font-weight:400;letter-spacing:0.1px;left:978px;">Oct 16, 2025</div>
<div class="t" style="top:266.42px;font-size:12.5px;color:#fff;font-weight:700;letter-spacing:0.1px;right:24.5px;text-align:right;">$700.00</div>
<div class="t" style="top:293.00px;font-size:13px;color:#fff;font-weight:400;letter-spacing:0.1px;left:978px;">Nov 16, 2025</div>
<div class="t" style="top:293.42px;font-size:12.5px;color:#fff;font-weight:700;letter-spacing:0.1px;right:24.5px;text-align:right;">$700.00</div>
<div class="t" style="top:320.00px;font-size:13px;color:#fff;font-weight:400;letter-spacing:0.1px;left:978px;">Dec 16, 2025</div>
<div class="t" style="top:320.42px;font-size:12.5px;color:#fff;font-weight:700;letter-spacing:0.1px;right:24.5px;text-align:right;">$700.00</div>
<div class="a" style="left:962px;top:350px;width:404px;height:132px;background:#1d1c20;border-radius:6px;"></div>
<div class="a" style="left:962px;top:350px;width:404px;height:40px;background:#000;border-radius:6px;border-bottom-left-radius:0;border-bottom-right-radius:0;"></div>
<div class="t" style="top:364.57px;font-size:13.5px;color:#d4d4d6;font-weight:700;letter-spacing:0.2px;left:978px;">Retail</div>
<div class="t" style="top:401.00px;font-size:13px;color:#fff;font-weight:400;letter-spacing:0.1px;left:978px;">Sub Total</div>
<div class="t" style="top:401.42px;font-size:12.5px;color:#fff;font-weight:700;letter-spacing:0.1px;right:24.5px;text-align:right;">$0.00</div>
<div class="t" style="top:428.40px;font-size:13px;color:#fff;font-weight:400;letter-spacing:0.1px;left:978px;">State Tax (9.5%)</div>
<div class="t" style="top:428.82px;font-size:12.5px;color:#fff;font-weight:700;letter-spacing:0.1px;right:24.5px;text-align:right;">$0.00</div>
<div class="t" style="top:455.50px;font-size:13px;color:#fff;font-weight:400;letter-spacing:0.1px;left:978px;">Due Today</div>
<div class="t" style="top:455.92px;font-size:12.5px;color:#fff;font-weight:700;letter-spacing:0.1px;right:24.5px;text-align:right;">$0.00</div>
<div class="a" style="left:962px;top:489.4px;width:404px;height:132px;background:#1d1c20;border-radius:6px;"></div>
<div class="a" style="left:962px;top:489.4px;width:404px;height:39.6px;background:#000;border-radius:6px;border-bottom-left-radius:0;border-bottom-right-radius:0;"></div>
<div class="t" style="top:502.97px;font-size:13.5px;color:#d4d4d6;font-weight:700;letter-spacing:0.2px;left:978px;">Suppelemts</div>
<div class="t" style="top:540.00px;font-size:13px;color:#fff;font-weight:400;letter-spacing:0.1px;left:978px;">Sub Total</div>
<div class="t" style="top:540.42px;font-size:12.5px;color:#fff;font-weight:700;letter-spacing:0.1px;right:24.5px;text-align:right;">$0.00</div>
<div class="t" style="top:567.00px;font-size:13px;color:#fff;font-weight:400;letter-spacing:0.1px;left:978px;">State Tax (9.5%)</div>
<div class="t" style="top:567.42px;font-size:12.5px;color:#fff;font-weight:700;letter-spacing:0.1px;right:24.5px;text-align:right;">$0.00</div>
<div class="t" style="top:594.00px;font-size:13px;color:#fff;font-weight:400;letter-spacing:0.1px;left:978px;">Due Today</div>
<div class="t" style="top:594.42px;font-size:12.5px;color:#fff;font-weight:700;letter-spacing:0.1px;right:24.5px;text-align:right;">$0.00</div>
<div class="a" style="left:954px;top:867.5px;width:420px;height:92.5px;background:#000;border-radius:0px;"></div>
<div class="t" style="top:888.50px;font-size:13px;color:#fff;font-weight:400;letter-spacing:0.1px;left:970.8px;">Total Due</div>
<div class="t" style="top:884.82px;font-size:21px;color:#fff;font-weight:700;right:25px;text-align:right;">$1,000.00</div>
<div class="a" style="left:970px;top:914.2px;width:190px;height:37.3px;background:#3a393e;border-radius:6px;"></div>
<div class="t" style="top:926.43px;font-size:14.5px;color:#fff;font-weight:700;left:765px;width:600px;text-align:center;">Cash Payment</div>
<div class="a" style="left:1168px;top:914.2px;width:190px;height:37.3px;background:#0a84ff;border-radius:6px;"></div>
<div class="t" style="top:926.43px;font-size:14.5px;color:#fff;font-weight:700;left:963px;width:600px;text-align:center;">Card Payment</div>
</body></html>
